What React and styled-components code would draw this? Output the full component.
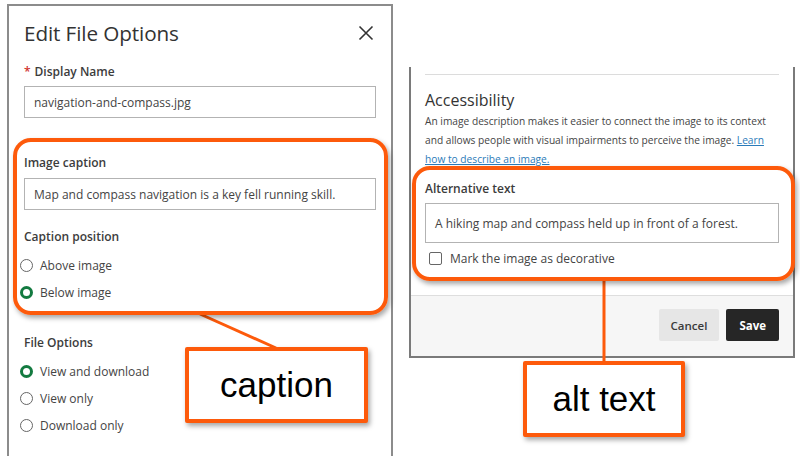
import React from 'react';
import styled, { createGlobalStyle } from 'styled-components';

const GlobalStyle = createGlobalStyle`
  html, body {
    margin: 0;
    padding: 0;
    background: #fff;
  }
  body {
    font-family: "Open Sans", "Noto Sans", sans-serif;
    color: #333;
  }
`;

const ORANGE = '#fd5a0b';

const Page = styled.div`
  position: relative;
  width: 800px;
  height: 456px;
  overflow: hidden;
  display: flex;
  align-items: flex-start;
  background: #fff;
`;

const LeftPanel = styled.div`
  margin: 4px 0 0 7px;
  width: 386px;
  height: 470px;
  box-sizing: border-box;
  border: 2px solid #8c8c8c;
  border-bottom: none;
  padding: 0 15px;
  background: #fff;
`;

const RightPanel = styled.div`
  margin: 67px 0 0 16px;
  width: 386px;
  box-sizing: border-box;
  border: 2px solid #7a7a7a;
  border-top: none;
  background: #fff;
`;

const Header = styled.div`
  display: flex;
  align-items: center;
  justify-content: space-between;
  height: 28px;
  margin-top: 13px;
`;

const Title = styled.h1`
  margin: 0;
  font-size: 20.7px;
  font-weight: 400;
  color: #333;
  letter-spacing: -0.1px;
`;

const CloseButton = styled.button`
  border: none;
  background: none;
  padding: 0;
  margin-right: 2px;
  width: 16px;
  height: 16px;
  display: flex;
  cursor: pointer;
`;

const Label = styled.div`
  font-size: 12px;
  font-weight: 600;
  line-height: 16px;
  color: #3c3c3c;
  margin-top: ${p => p.$top || 0}px;
`;

const Required = styled.span`
  color: #d0312d;
  margin-right: 4px;
`;

const TextInput = styled.div`
  box-sizing: border-box;
  height: ${p => p.$h || 32}px;
  margin-top: ${p => p.$top || 6}px;
  border: 1px solid #b3b3b3;
  display: flex;
  align-items: center;
  padding: 0 9px;
  font-size: 12px;
  color: #444;
`;

const RadioGroup = styled.div`
  margin-top: 7px;
`;

const RadioRow = styled.label`
  display: flex;
  align-items: center;
  height: 27px;
  margin-left: -4px;
  gap: 7px;
  font-size: 12px;
  color: #444;
`;

const RadioDot = styled.span`
  box-sizing: border-box;
  width: 13px;
  height: 13px;
  border-radius: 50%;
  border: ${p => (p.$on ? '3.5px solid #137a40' : '1.3px solid #666')};
  background: #fff;
`;

const Separator = styled.div`
  height: 1px;
  background: #dcdcdc;
  margin: 7px 14px 0;
`;

const Body = styled.div`
  padding: 0 14px 29px;
`;

const Heading = styled.h2`
  margin: 14px 0 0;
  font-size: 16px;
  font-weight: 500;
  line-height: 22px;
  color: #333;
`;

const Description = styled.p`
  margin: 1px 0 0;
  font-size: 10.2px;
  line-height: 19px;
  color: #444;
  white-space: nowrap;
`;

const Link = styled.a`
  color: #2b7bb9;
  text-decoration: underline;
`;

const CheckRow = styled.label`
  display: flex;
  align-items: center;
  gap: 8px;
  height: 16px;
  margin: 7px 0 0 4px;
  font-size: 12px;
  color: #444;
`;

const CheckBox = styled.span`
  box-sizing: border-box;
  width: 13px;
  height: 13px;
  border: 1.3px solid #666;
  border-radius: 2px;
`;

const Footer = styled.div`
  display: flex;
  justify-content: flex-end;
  gap: 7px;
  padding: 13px 14px 15px;
  border-top: 1px solid #dedede;
  background: #f6f6f6;
`;

const Button = styled.button`
  height: 32px;
  padding: 0 ${p => (p.$primary ? 13 : 12)}px;
  border: none;
  border-radius: 2px;
  font-family: "Open Sans", sans-serif;
  font-size: 11.5px;
  font-weight: ${p => (p.$primary ? 700 : 600)};
  color: ${p => (p.$primary ? '#fff' : '#3a3a3a')};
  background: ${p => (p.$primary ? '#262626' : '#e6e6e6')};
`;

const Highlight = styled.div`
  position: absolute;
  box-sizing: border-box;
  border: 4px solid ${ORANGE};
  border-radius: 18px;
  box-shadow: 2px 3px 5px rgba(0, 0, 0, 0.35);
  pointer-events: none;
`;

const Callout = styled.div`
  position: absolute;
  box-sizing: border-box;
  border: 4px solid ${ORANGE};
  border-radius: 2px;
  background: #fff;
  box-shadow: 2px 3px 5px rgba(0, 0, 0, 0.35);
  display: flex;
  align-items: center;
  justify-content: center;
  font-family: "Liberation Sans", Arial, sans-serif;
  font-size: 35px;
  color: #000;
`;

const Connectors = styled.svg`
  position: absolute;
  left: 0;
  top: 0;
  pointer-events: none;
`;

const Radio = ({ on, children }) => (
  <RadioRow>
    <RadioDot $on={on} />
    {children}
  </RadioRow>
);

const CloseIcon = () => (
  <svg width="16" height="16" viewBox="0 0 16 16">
    <path d="M1.5 1.5 L14.5 14.5 M14.5 1.5 L1.5 14.5" stroke="#333" strokeWidth="1.6" />
  </svg>
);

const App = () => (
  <>
    <GlobalStyle />
    <Page>
      <LeftPanel>
        <Header>
          <Title>Edit File Options</Title>
          <CloseButton aria-label="Close">
            <CloseIcon />
          </CloseButton>
        </Header>
        <Label $top={17}>
          <Required>*</Required>Display Name
        </Label>
        <TextInput>navigation-and-compass.jpg</TextInput>
        <Label $top={37}>Image caption</Label>
        <TextInput $top={7}>Map and compass navigation is a key fell running skill.</TextInput>
        <Label $top={19}>Caption position</Label>
        <RadioGroup>
          <Radio>Above image</Radio>
          <Radio on>Below image</Radio>
        </RadioGroup>
        <Label $top={29}>File Options</Label>
        <RadioGroup>
          <Radio on>View and download</Radio>
          <Radio>View only</Radio>
          <Radio>Download only</Radio>
        </RadioGroup>
      </LeftPanel>

      <RightPanel>
        <Separator />
        <Body>
          <Heading>Accessibility</Heading>
          <Description>
            An image description makes it easier to connect the image to its context
            <br />
            and allows people with visual impairments to perceive the image. <Link>Learn</Link>
            <br />
            <Link>how to describe an image.</Link>
          </Description>
          <Label $top={12}>Alternative text</Label>
          <TextInput $h={40}>A hiking map and compass held up in front of a forest.</TextInput>
          <CheckRow>
            <CheckBox />
            Mark the image as decorative
          </CheckRow>
        </Body>
        <Footer>
          <Button>Cancel</Button>
          <Button $primary>Save</Button>
        </Footer>
      </RightPanel>

      <Connectors width="800" height="456">
        <line x1="200" y1="314" x2="276" y2="348" stroke={ORANGE} strokeWidth="3" />
        <line x1="604" y1="280" x2="604" y2="362" stroke={ORANGE} strokeWidth="3" />
      </Connectors>

      <Highlight style={{ left: 13, top: 138, width: 375, height: 177 }} />
      <Highlight style={{ left: 412, top: 166, width: 383, height: 115 }} />
      <Callout style={{ left: 185, top: 347, width: 183, height: 76 }}>caption</Callout>
      <Callout style={{ left: 523, top: 361, width: 162, height: 76 }}>alt text</Callout>
    </Page>
  </>
);

export default App;
